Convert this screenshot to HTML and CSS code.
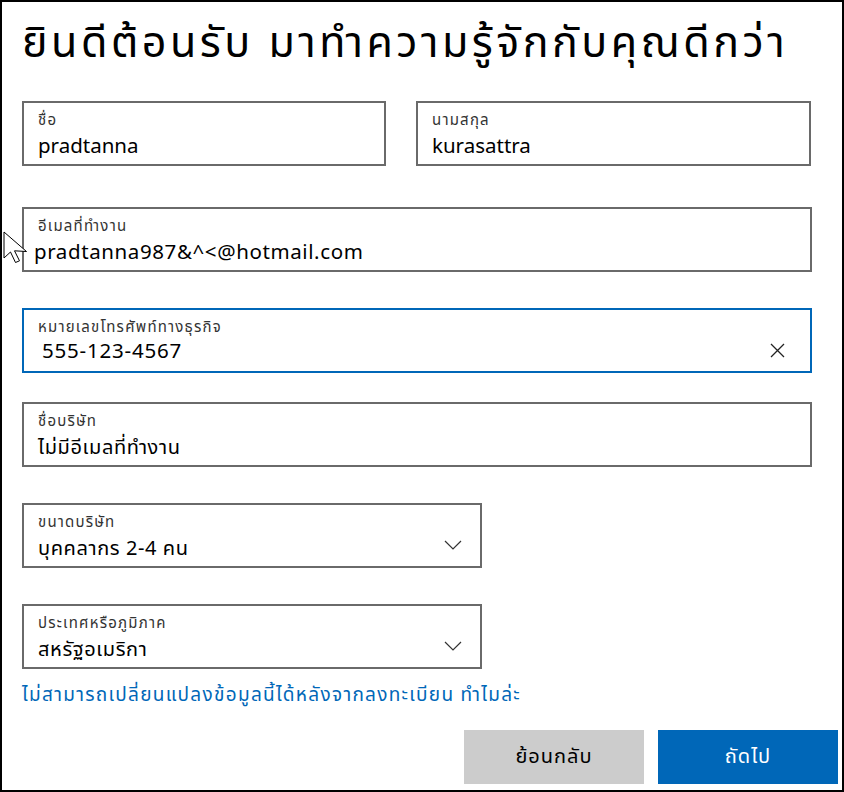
FILE: index.html
```html
<!DOCTYPE html>
<html lang="th">
<head>
<meta charset="utf-8">
<link rel="stylesheet" href="styles.css">
</head>
<body>
<div class="frame">
  <h1 class="title">ยินดีต้อนรับ มาทำความรู้จักกับคุณดีกว่า</h1>

  <div class="row row-name">
    <div class="field f-first">
      <div class="label">ชื่อ</div>
      <div class="value">pradtanna</div>
    </div>
    <div class="field f-last">
      <div class="label">นามสกุล</div>
      <div class="value">kurasattra</div>
    </div>
  </div>

  <div class="field f-wide f-email">
    <div class="label">อีเมลที่ทำงาน</div>
    <div class="value v-email">pradtanna987&amp;^&lt;@hotmail.com</div>
  </div>

  <div class="field f-wide f-phone focused">
    <div class="label">หมายเลขโทรศัพท์ทางธุรกิจ</div>
    <div class="value v-phone">555-123-4567</div>
    <svg class="clear" width="15" height="15" viewBox="0 0 15 15"><path d="M1 1 L14 14 M14 1 L1 14" stroke="#222" stroke-width="1.3" fill="none"/></svg>
  </div>

  <div class="field f-wide f-company">
    <div class="label">ชื่อบริษัท</div>
    <div class="value th">ไม่มีอีเมลที่ทำงาน</div>
  </div>

  <div class="field f-select f-size">
    <div class="label">ขนาดบริษัท</div>
    <div class="value th">บุคคลากร 2-4 คน</div>
    <svg class="chev" width="18" height="10" viewBox="0 0 18 10"><path d="M1 1 L9 9 L17 1" stroke="#333" stroke-width="1.2" fill="none"/></svg>
  </div>

  <div class="field f-select f-country">
    <div class="label">ประเทศหรือภูมิภาค</div>
    <div class="value th">สหรัฐอเมริกา</div>
    <svg class="chev" width="18" height="10" viewBox="0 0 18 10"><path d="M1 1 L9 9 L17 1" stroke="#333" stroke-width="1.2" fill="none"/></svg>
  </div>

  <a class="note" href="#">ไม่สามารถเปลี่ยนแปลงข้อมูลนี้ได้หลังจากลงทะเบียน ทำไมล่ะ</a>

  <div class="actions">
    <button class="btn btn-back">ย้อนกลับ</button>
    <button class="btn btn-next">ถัดไป</button>
  </div>

  <svg class="cursor" width="26" height="34" viewBox="0 0 26 34"><path d="M1 1 L1 27 L7.5 21 L12.5 31.5 L16.5 29.8 L11.5 19.8 L23.5 20.5 Z" fill="#fff" stroke="#000" stroke-width="1" stroke-linejoin="miter"/></svg>
</div>
</body>
</html>
```
FILE: styles.css
```css
* { box-sizing: border-box; }
html, body { margin: 0; padding: 0; background: #fff; }
body {
  font-family: "Segoe UI", "Leelawadee UI", "Noto Sans Thai", "Noto Sans", "DejaVu Sans", sans-serif;
  color: #000;
}
.frame {
  position: relative;
  width: 844px;
  height: 792px;
  border: 2px solid #000;
  padding: 0 0 0 20px;
  overflow: hidden;
}
.title {
  margin: 0;
  padding-top: 12px;
  height: 99px;
  font-size: 43px;
  font-weight: 400;
  line-height: 60px;
  letter-spacing: 3.5px;
  white-space: nowrap;
}
.row { display: flex; }
.field {
  position: relative;
  height: 65px;
  border: 2px solid #6a6a6a;
  padding: 8px 14px 0 14px;
}
.f-first { width: 364px; }
.f-last { width: 395px; margin-left: 30px; }
.f-wide { width: 790px; }
.f-email { margin-top: 41px; }
.f-phone { margin-top: 36px; }
.f-company { margin-top: 29px; }
.f-select { width: 460px; }
.f-size { margin-top: 36px; }
.f-country { margin-top: 36px; }
.focused { border-color: #0067b8; }
.label {
  font-size: 15px;
  line-height: 20px;
  letter-spacing: 1.2px;
  color: #333;
}
.value {
  margin-top: 2px;
  font-size: 20.5px;
  line-height: 28px;
  color: #000;
  white-space: nowrap;
}
.value.th { font-size: 20px; letter-spacing: 0.6px; }
.v-email { margin-left: -4px; letter-spacing: 0.6px; }
.v-phone { margin-left: 4px; margin-top: 0; letter-spacing: 0.8px; }
.clear { position: absolute; right: 25px; top: 33px; }
.chev { position: absolute; right: 18px; top: 35px; }
.note {
  display: block;
  margin-top: 14px;
  font-size: 19px;
  line-height: 26px;
  letter-spacing: 1.3px;
  color: #0067b8;
  text-decoration: none;
  white-space: nowrap;
}
.actions {
  display: flex;
  justify-content: flex-end;
  gap: 14px;
  margin-top: 21px;
  padding-right: 4px;
}
.btn {
  border: none;
  height: 54px;
  width: 180px;
  font-family: inherit;
  font-size: 20px;
  letter-spacing: 1px;
}
.btn-back { background: #cccccc; color: #000; }
.btn-next { background: #0067b8; color: #fff; }
.cursor { position: absolute; left: 1px; top: 229px; }
```
